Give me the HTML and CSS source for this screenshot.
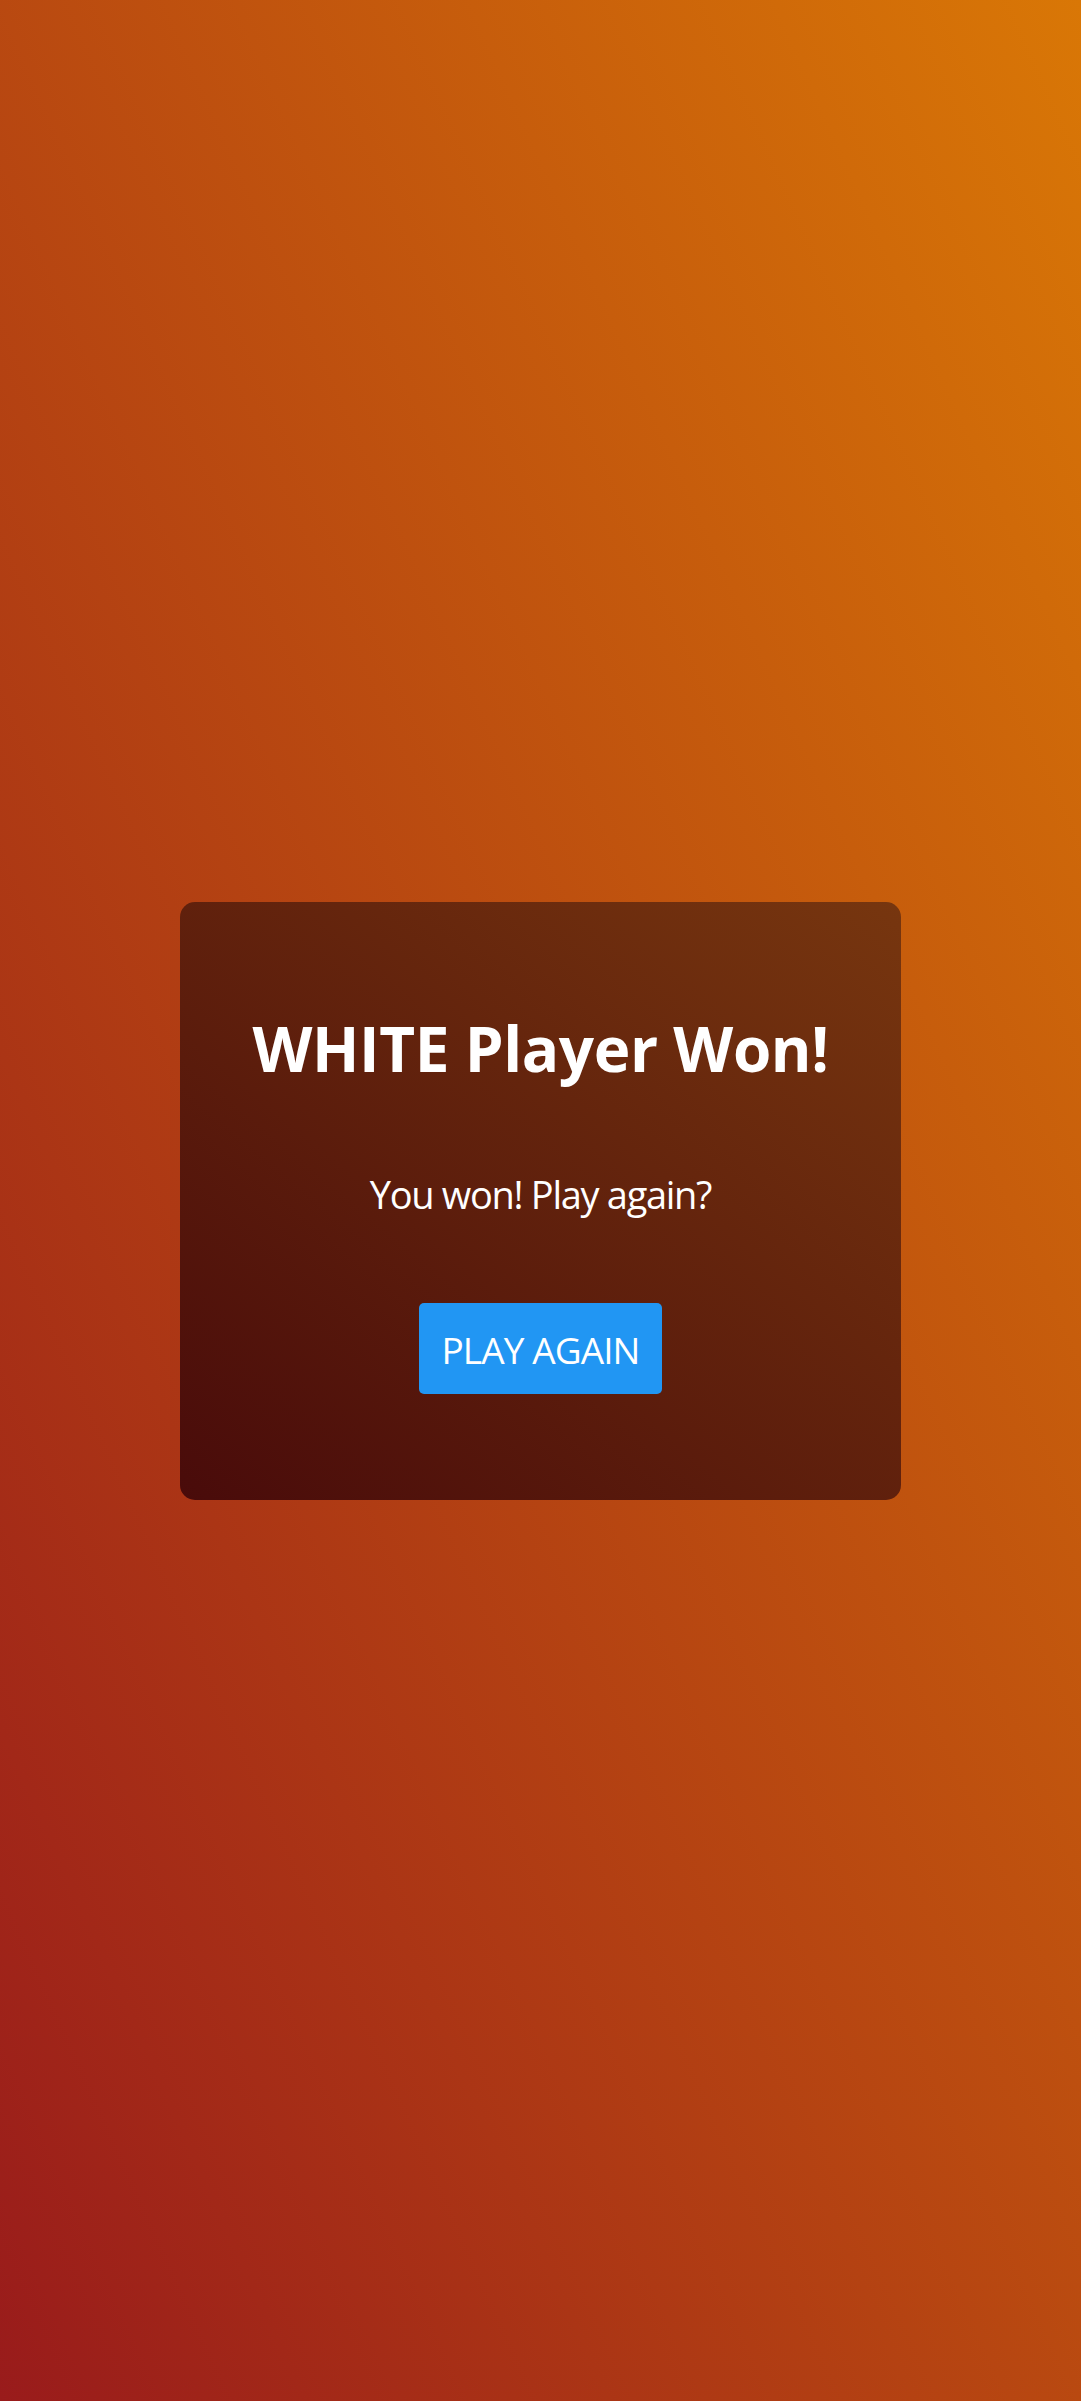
FILE: index.html
```html
<!DOCTYPE html>
<html lang="en">
<head>
<meta charset="utf-8">
<title>Game Over</title>
<link rel="stylesheet" href="styles.css">
</head>
<body>
<main class="screen">
  <section class="card">
    <h1 class="title">WHITE Player Won!</h1>
    <p class="message">You won! Play again?</p>
    <button class="btn" type="button">PLAY AGAIN</button>
  </section>
</main>
</body>
</html>
```

FILE: styles.css
```css
html, body {
  margin: 0;
  padding: 0;
}

body {
  font-family: "Open Sans", "Noto Sans", sans-serif;
  color: #ffffff;
}

.screen {
  min-height: 2401px;
  display: flex;
  align-items: center;
  justify-content: center;
  background: linear-gradient(to top right, #991b1b, #d97706);
}

.card {
  width: 721px;
  box-sizing: border-box;
  padding: 115px 20px 106px;
  border-radius: 15px;
  background: linear-gradient(to top right, #490b0a, #77360f);
  display: flex;
  flex-direction: column;
  align-items: center;
}

.title {
  margin: 0;
  font-size: 62px;
  line-height: 62px;
  font-weight: 700;
  letter-spacing: -0.4px;
}

.message {
  margin: 96px 0 0;
  font-size: 38px;
  line-height: 38px;
  font-weight: 400;
  letter-spacing: -1.3px;
}

.btn {
  margin-top: 90px;
  font-family: inherit;
  font-size: 37px;
  line-height: 37px;
  color: #ffffff;
  background: #2196f3;
  border: none;
  border-radius: 5px;
  padding: 28px 22px 26px;
  letter-spacing: -0.9px;
}
```
